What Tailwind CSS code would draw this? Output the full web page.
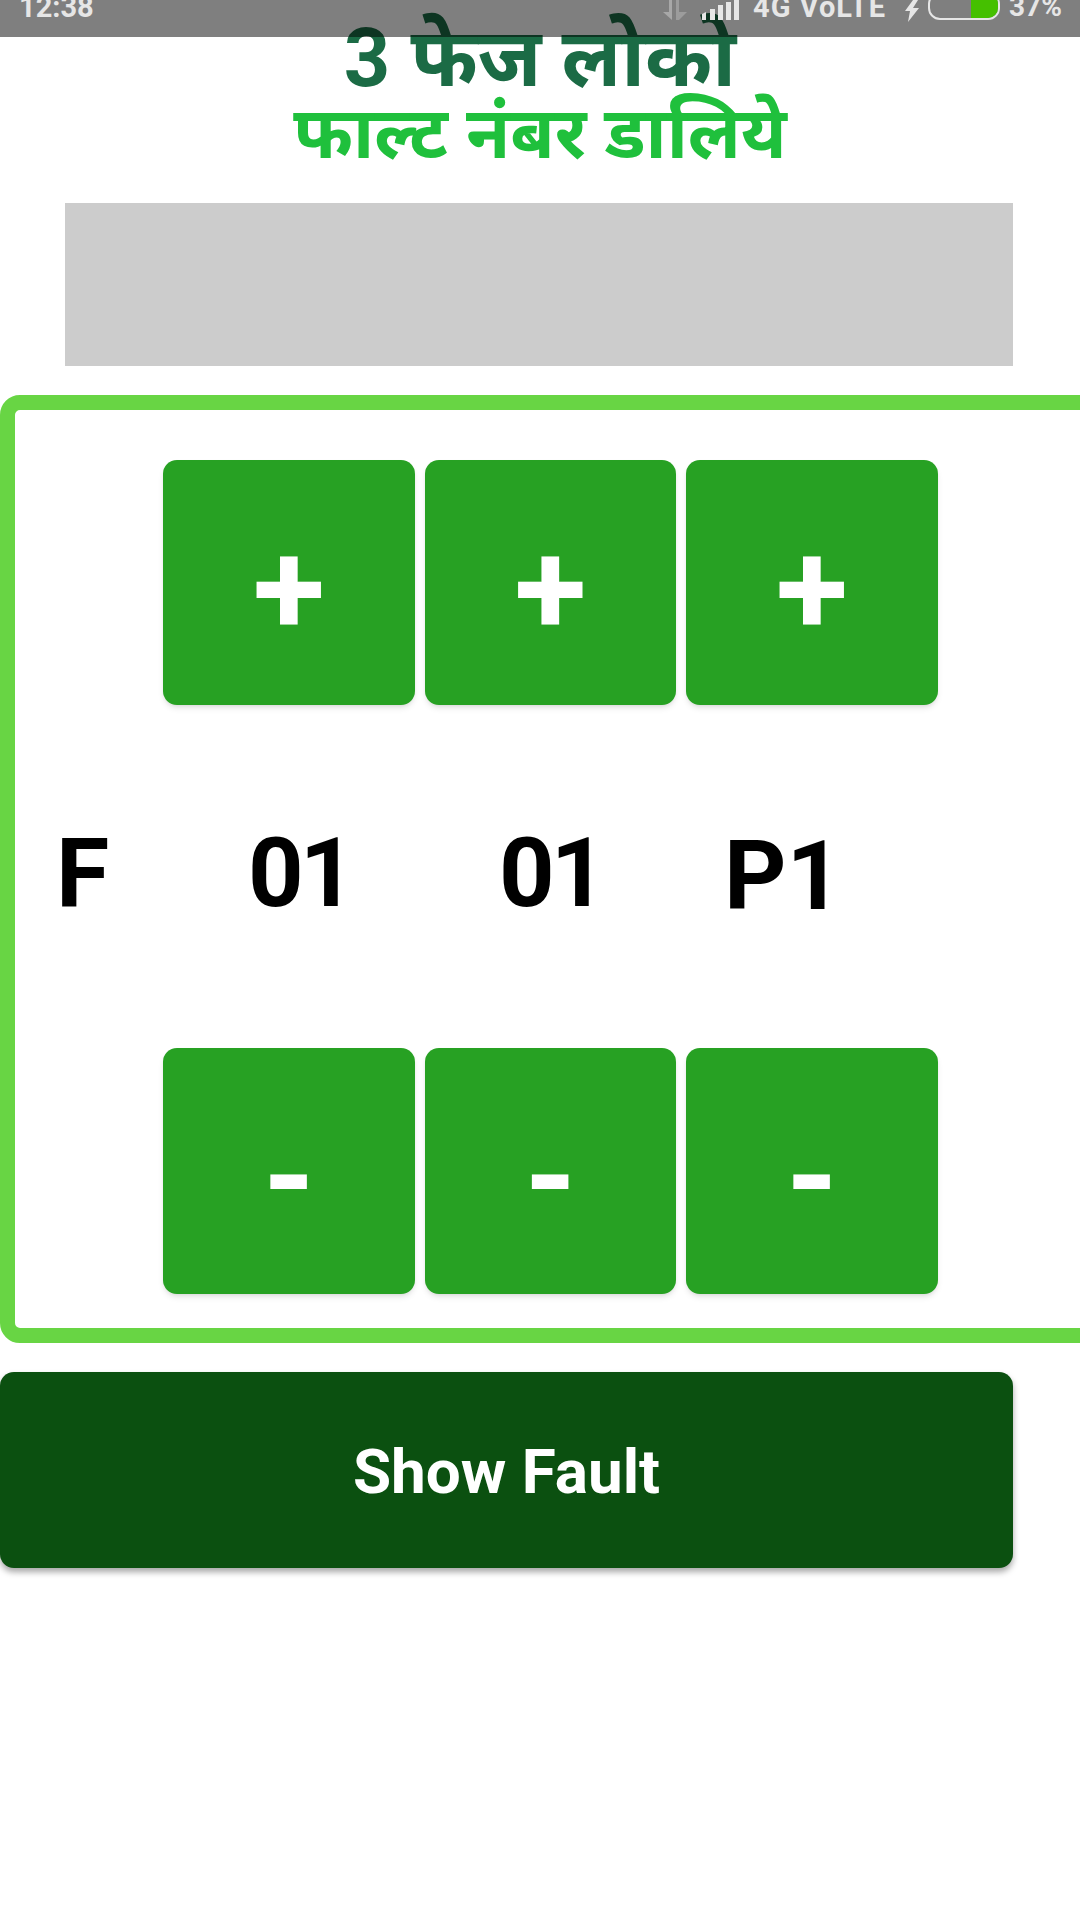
<!DOCTYPE html>
<html lang="hi">
<head>
  <meta charset="UTF-8" />
  <meta name="viewport" content="width=device-width, initial-scale=1.0" />
  <title>3 फेज लोको</title>
  <script src="https://cdn.jsdelivr.net/npm/@tailwindcss/browser@4"></script>
</head>
<body class="bg-white font-['Roboto','Noto_Sans',sans-serif]">
<div class="relative w-[1080px] h-[1920px] overflow-hidden">

  <!-- Status bar -->
  <div class="absolute top-0 left-0 z-10 w-full h-[37px] bg-black/50 overflow-hidden text-[#e6e6e6] text-[29px] font-bold leading-none">
    <span class="absolute left-[19px] top-[-7px]">12:38</span>
    <svg class="absolute left-[660px] top-0" width="30" height="21" viewBox="0 0 30 21" fill="#a8a8a8">
      <path d="M3 12 L9 12 L9 0 L12 0 L12 20 Z"/>
      <path d="M16 0 L19 0 L19 12 L27 12 L19 20 L16 20 Z" opacity="0.7"/>
    </svg>
    <svg class="absolute left-[702px] top-0" width="38" height="20" viewBox="0 0 38 20" fill="#e6e6e6">
      <path d="M0 14 L4 12 L4 20 L0 20 Z"/>
      <rect x="8" y="9" width="5" height="11"/>
      <rect x="16" y="5" width="5" height="15"/>
      <rect x="24" y="2" width="5" height="18"/>
      <rect x="32" y="0" width="5" height="20"/>
    </svg>
    <span class="absolute left-[753px] top-[-7px] tracking-[1px]">4G VoLTE</span>
    <svg class="absolute left-[904px] top-0" width="15" height="22" viewBox="0 0 15 22" fill="#e6e6e6">
      <path d="M9 0 L14 0 L9 8 L15 8 L4 22 L6 11 L1 11 Z"/>
    </svg>
    <div class="absolute left-[928px] top-[-8px] w-[72px] h-[28px] rounded-[12px] border-2 border-[#e6e6e6] overflow-hidden flex justify-end">
      <div class="w-[27px] h-full bg-[#45c000]"></div>
    </div>
    <span class="absolute left-[1009px] top-[-7px] text-[28px]">37%</span>
  </div>

  <!-- Titre -->
  <div class="flex flex-col items-center font-bold">
    <div class="h-[93px] text-[81px] leading-[118px] text-[#1b6b45]">3 फेज लोको</div>
    <div class="h-[70px] text-[72px] leading-[82px] text-[#1fc03c]">फाल्ट नंबर डालिये</div>
  </div>

  <!-- Banniere -->
  <div class="ml-[65px] mt-[40px] w-[948px] h-[163px] bg-[#cccccc]"></div>

  <!-- Selecteur -->
  <div class="mt-[29px] w-[1110px] h-[948px] rounded-[20px] border-[15px] border-[#68d544] pl-[148px] pt-[50px]">
    <div class="flex gap-[10px] text-white font-bold text-[132px]">
      <button class="w-[252px] h-[245px] rounded-[14px] bg-[#27a123] shadow-md flex items-center justify-center pt-[12px]">+</button>
      <button class="w-[251px] h-[245px] rounded-[14px] bg-[#27a123] shadow-md flex items-center justify-center pt-[12px]">+</button>
      <button class="w-[252px] h-[245px] rounded-[14px] bg-[#27a123] shadow-md flex items-center justify-center pt-[12px]">+</button>
    </div>
    <div class="flex items-center h-[343px] -ml-[148px] text-[97px] font-bold text-black">
      <span class="ml-[41px] w-[192px] -translate-y-[3px]">F</span>
      <span class="w-[251px] -translate-y-[3px] tracking-[-4px]">01</span>
      <span class="w-[225px] -translate-y-[3px] tracking-[-4px]">01</span>
      <span>P1</span>
    </div>
    <div class="flex gap-[10px] text-white font-bold text-[132px]">
      <button class="w-[252px] h-[246px] rounded-[14px] bg-[#27a123] shadow-md flex items-center justify-center pt-[12px]">-</button>
      <button class="w-[251px] h-[246px] rounded-[14px] bg-[#27a123] shadow-md flex items-center justify-center pt-[12px]">-</button>
      <button class="w-[252px] h-[246px] rounded-[14px] bg-[#27a123] shadow-md flex items-center justify-center pt-[12px]">-</button>
    </div>
  </div>

  <button class="mt-[29px] w-[1013px] h-[196px] rounded-[14px] bg-[#0b5010] shadow-[0_4px_6px_rgba(0,0,0,0.35)] text-white text-[62px] font-bold flex items-center justify-center pt-[3px]">Show Fault</button>
</div>
</body>
</html>
